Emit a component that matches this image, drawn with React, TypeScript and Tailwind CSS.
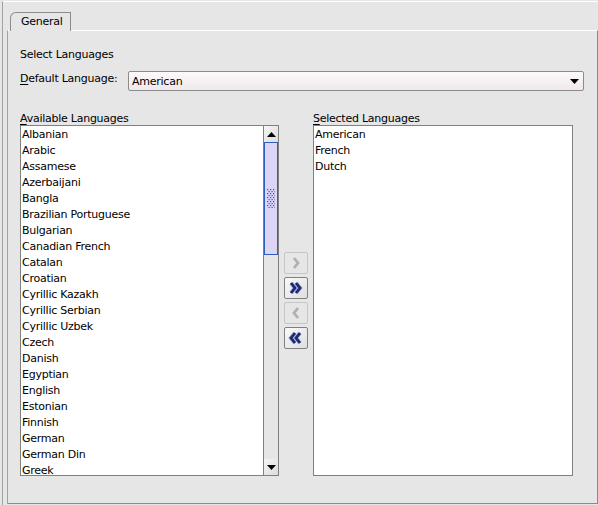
import React from 'react';

const languages = [
  'Albanian',
  'Arabic',
  'Assamese',
  'Azerbaijani',
  'Bangla',
  'Brazilian Portuguese',
  'Bulgarian',
  'Canadian French',
  'Catalan',
  'Croatian',
  'Cyrillic Kazakh',
  'Cyrillic Serbian',
  'Cyrillic Uzbek',
  'Czech',
  'Danish',
  'Egyptian',
  'English',
  'Estonian',
  'Finnish',
  'German',
  'German Din',
  'Greek',
];

const selected = ['American', 'French', 'Dutch'];

const Mnemonic: React.FC<{ text: string }> = ({ text }) => (
  <span>
    <span className="underline underline-offset-[2px]">{text[0]}</span>
    {text.slice(1)}
  </span>
);

const Chevron: React.FC<{ dir: 'right' | 'left'; double?: boolean; enabled?: boolean }> = ({
  dir,
  double,
  enabled,
}) => {
  const pts = (x: number) =>
    dir === 'right' ? `${x},6 ${x + 4},11 ${x},16` : `${x + 4},6 ${x},11 ${x + 4},16`;
  const xs = double ? [6, 11] : [9];
  return (
    <svg width="22" height="20" viewBox="0 0 22 20" className="block">
      {xs.map((x) => (
        <g key={x} transform="translate(0,-1)">
          {enabled && (
            <polyline points={pts(x)} fill="none" stroke="#a9b3e0" strokeWidth="4.4" strokeLinejoin="miter" />
          )}
          <polyline
            points={pts(x)}
            fill="none"
            stroke={enabled ? '#1f2a6e' : '#b0b0b0'}
            strokeWidth="2.8"
            strokeLinejoin="miter"
          />
        </g>
      ))}
    </svg>
  );
};

const MoveButton: React.FC<{ dir: 'right' | 'left'; double?: boolean; enabled?: boolean }> = (props) => (
  <button
    className={`w-[24px] h-[22px] rounded-[2px] border flex items-center justify-center ${
      props.enabled
        ? 'border-[#808080] bg-gradient-to-br from-[#fafafa] to-[#dedede]'
        : 'border-[#c6c6c6] bg-[#e6e6e6]'
    }`}
  >
    <Chevron {...props} />
  </button>
);

const ScrollArrow: React.FC<{ up?: boolean }> = ({ up }) => (
  <div className="h-[16px] bg-gradient-to-br from-[#f6f6f6] to-[#dcdcdc] flex items-center justify-center">
    <svg width="9" height="5" viewBox="0 0 9 5" className="block">
      <polygon points={up ? '0,5 9,5 4.5,0' : '0,0 9,0 4.5,5'} fill="#000" />
    </svg>
  </div>
);

const Scrollbar: React.FC = () => (
  <div className="w-[15px] border-l border-[#808080] flex flex-col bg-[#e6e6e6]">
    <ScrollArrow up />
    <div className="h-[113px] border border-[#2f5fc4] bg-[#dcd5f5] flex items-center justify-center">
      <svg width="8" height="19" viewBox="0 0 8 19" className="block">
        {Array.from({ length: 10 }).map((_, r) =>
          [0, 1, 2].map((c) => (
            <rect key={`${r}-${c}`} x={c * 3 + (r % 2) * 1.5} y={r * 2} width="1.2" height="1.2" fill="#3a48c4" />
          ))
        )}
      </svg>
    </div>
    <div className="flex-1" />
    <ScrollArrow />
  </div>
);

const App: React.FC = () => {
  return (
    <div
      className="w-[598px] h-[505px] bg-[#e6e6e6] pt-px pl-[2px] text-[11px] leading-[14px] tracking-[-0.25px] text-black overflow-hidden"
      style={{ fontFamily: '"DejaVu Sans", "Liberation Sans", sans-serif' }}
    >
      <div className="h-full border-t border-l border-t-white border-l-[#a2a2a2] pl-[4px] pt-[10px]">
        {/* tab strip */}
        <div className="relative z-10 -mb-px ml-[3px] w-[61px] h-[19px] border-t border-l border-r border-[#8c8c8c] rounded-tl-[6px] bg-[#e6e6e6] pl-[10px] pt-[2px]">
          General
        </div>

        {/* tab panel */}
        <div className="w-[591px] h-[474px] border border-t-white border-l-[#a2a2a2] border-r-[#8a8a8a] border-b-[#8a8a8a] pl-[12px] pr-[13px] pt-[17px]">
          <div>Select Languages</div>

          <div className="mt-[9px] flex items-start h-[20px]">
            <label className="w-[108px] mt-[1px]">
              <Mnemonic text="Default Language:" />
            </label>
            <div className="w-[456px] h-[20px] rounded-[2px] border border-[#8c8c8c] bg-gradient-to-b from-[#fdfafb] to-[#efe8ec] flex items-center pl-[3px] pr-[3px] pt-px">
              <span className="flex-1">American</span>
              <svg width="9" height="5" viewBox="0 0 9 5" className="block mr-[1px]">
                <polygon points="0,0 9,0 4.5,5" fill="#000" />
              </svg>
            </div>
          </div>

          <div className="mt-[19px] flex items-start">
            <div className="w-[259px]">
              <div className="h-[15px] pt-[2px]">
                <Mnemonic text="Available Languages" />
              </div>
              <div className="h-[351px] border border-[#808080] bg-white flex">
                <div className="flex-1 overflow-hidden pt-px">
                  {languages.map((l) => (
                    <div key={l} className="h-[16px] leading-[16px] pl-[1px] whitespace-nowrap">
                      {l}
                    </div>
                  ))}
                </div>
                <Scrollbar />
              </div>
            </div>

            <div className="w-[34px] pt-[15px] h-[366px] flex flex-col items-center justify-center gap-[3px]">
              <MoveButton dir="right" />
              <MoveButton dir="right" double enabled />
              <MoveButton dir="left" />
              <MoveButton dir="left" double enabled />
            </div>

            <div className="w-[260px]">
              <div className="h-[15px] pt-[2px]">
                <Mnemonic text="Selected Languages" />
              </div>
              <div className="h-[351px] border border-[#808080] bg-white pt-px">
                {selected.map((l) => (
                  <div key={l} className="h-[16px] leading-[16px] pl-[1px] whitespace-nowrap">
                    {l}
                  </div>
                ))}
              </div>
            </div>
          </div>
        </div>
      </div>
    </div>
  );
};

export default App;
